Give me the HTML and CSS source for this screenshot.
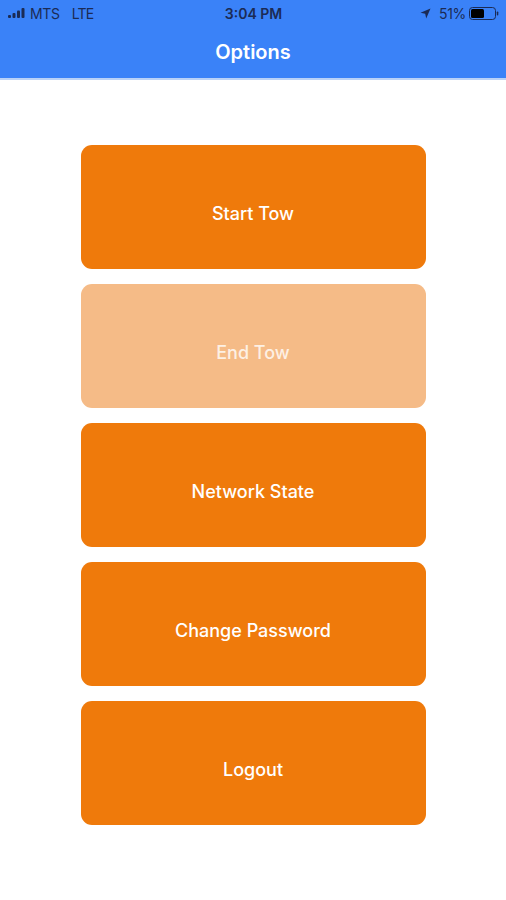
FILE: index.html
```html
<!DOCTYPE html>
<html>
<head>
  <title>Options</title>
  <link rel="stylesheet" href="styles.css">
</head>
<body>
  <div class="header">
    <div class="status-bar">
      <div class="status-left">
        <svg class="signal" width="17" height="10" viewBox="0 0 17 10">
          <rect x="0" y="7" width="3" height="3" rx="1"/>
          <rect x="4.5" y="5" width="3" height="5" rx="1"/>
          <rect x="9" y="2.5" width="3" height="7.5" rx="1"/>
          <rect x="13.5" y="0" width="3" height="10" rx="1"/>
        </svg>
        <span class="carrier">MTS</span>
        <span class="network">LTE</span>
      </div>
      <div class="status-time">3:04 PM</div>
      <div class="status-right">
        <svg class="arrow" width="11" height="11" viewBox="0 0 11 11">
          <path d="M10.5 0.5 L0.5 4.8 L5.2 5.8 L6.2 10.5 Z"/>
        </svg>
        <span class="battery-text">51%</span>
        <svg class="battery" width="30" height="13" viewBox="0 0 30 13">
          <rect x="0.5" y="0.5" width="26" height="12" rx="3" fill="none" stroke="#1b2b55" stroke-width="1"/>
          <rect x="2" y="2" width="13" height="9" rx="1.5" fill="#000"/>
          <rect x="27.8" y="4.5" width="1.5" height="4" rx="0.7" fill="#1b2b55"/>
        </svg>
      </div>
    </div>
    <div class="nav-bar">
      <h1 class="nav-title">Options</h1>
    </div>
  </div>

  <div class="options">
    <button class="option-btn">Start Tow</button>
    <button class="option-btn disabled">End Tow</button>
    <button class="option-btn">Network State</button>
    <button class="option-btn">Change Password</button>
    <button class="option-btn">Logout</button>
  </div>
</body>
</html>
```

FILE: styles.css
```css
body {
  margin: 0;
  font-family: Inter, "Noto Sans", Arial, sans-serif;
  background-color: #fff;
}

.header {
  background-color: #3a82f8;
  border-bottom: 2px solid #b9d2f8;
}

.status-bar {
  height: 26px;
  display: flex;
  align-items: center;
  justify-content: space-between;
  padding: 0 7px 0 8px;
  color: #1b2b55;
  font-size: 14px;
}

.status-left,
.status-right {
  width: 110px;
  display: flex;
  align-items: center;
}

.status-right {
  justify-content: flex-end;
}

.signal {
  fill: #1b2b55;
  margin-right: 5px;
}

.carrier {
  margin-right: 12px;
  letter-spacing: -0.3px;
}

.network {
  letter-spacing: -0.8px;
}

.status-time {
  font-weight: 600;
  font-size: 14px;
}

.arrow {
  fill: #1b2b55;
  margin-right: 8px;
}

.battery-text {
  margin-right: 3px;
  letter-spacing: -0.3px;
}

.nav-bar {
  height: 52px;
  display: flex;
  align-items: center;
  justify-content: center;
}

.nav-title {
  margin: 0;
  color: #fff;
  font-size: 20px;
  font-weight: 600;
}

.options {
  display: flex;
  flex-direction: column;
  align-items: center;
  gap: 15px;
  padding-top: 65px;
}

.option-btn {
  width: 345px;
  height: 124px;
  padding: 12px 0 0 0;
  border: none;
  border-radius: 11px;
  background-color: #ef7a0b;
  color: #fff;
  font-family: Inter, "Noto Sans", Arial, sans-serif;
  font-size: 18px;
  font-weight: 500;
  cursor: pointer;
}

.option-btn.disabled {
  background-color: #f5bb87;
  color: #fdf0e4;
}
```
